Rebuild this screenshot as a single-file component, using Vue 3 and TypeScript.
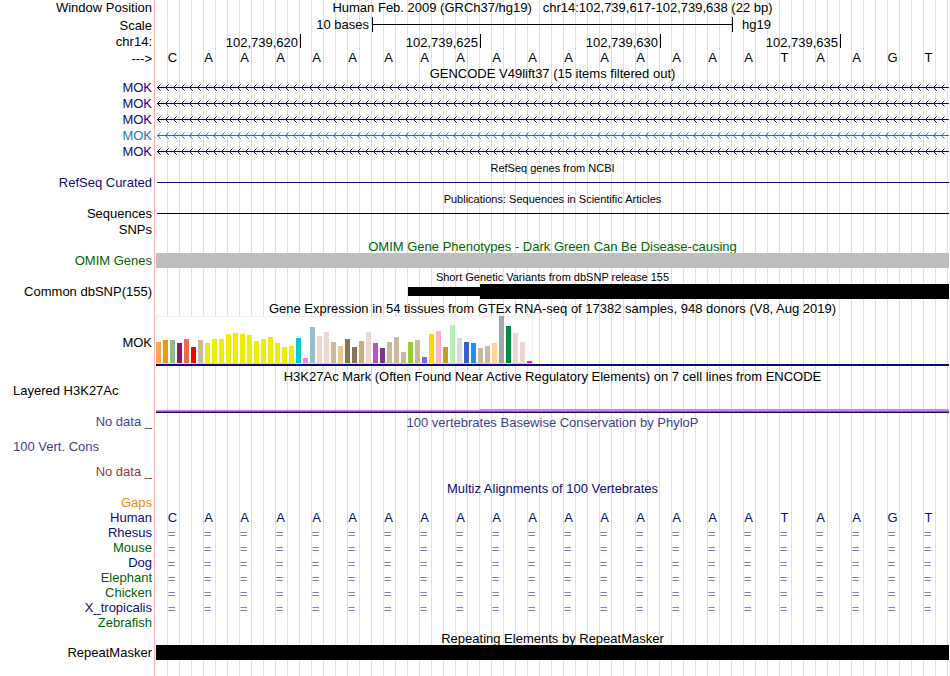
<script setup lang="ts">
interface Bar { h: number; c: string }

const bases: string[] = 'CAAAAAAAAAAAAAAAATAAGT'.split('')
const gridCells = 66

const transcripts: string[] = ['navy', 'navy', 'navy', 'blue', 'navy']
const species: { name: string; tone: string; aligned: boolean }[] = [
  { name: 'Rhesus', tone: 'navy', aligned: true },
  { name: 'Mouse', tone: 'green', aligned: true },
  { name: 'Dog', tone: 'navy', aligned: true },
  { name: 'Elephant', tone: 'green', aligned: true },
  { name: 'Chicken', tone: 'green', aligned: true },
  { name: 'X_tropicalis', tone: 'navy', aligned: true },
  { name: 'Zebrafish', tone: 'green', aligned: false },
]

const positions: string[] = ['102,739,620', '102,739,625', '102,739,630', '102,739,635']

// Median expression per tissue, as bar height in pixels and tissue colour
const tissues: Bar[] = (
  '21 ffa54f,23 ee9a00,23 8fbc8f,20 8b1c62,24 ee6a50,16 ff0000,23 cdb79e,' +
  '20 eeee00,24 eeee00,24 eeee00,29 eeee00,30 eeee00,29 eeee00,28 eeee00,22 eeee00,' +
  '24 eeee00,26 eeee00,20 eeee00,16 eeee00,17 eeee00,25 00cdcd,5 ee82ee,36 9ac0cd,' +
  '27 eed5d2,31 eed5d2,21 cdb79e,17 eec591,24 8b7355,16 8b7355,22 cdaa7d,31 eed5d2,' +
  '20 b452cd,15 7a378b,21 cdb79e,26 cdb79e,11 cdb79e,21 9acd32,23 cdb79e,6 7a67ee,' +
  '29 ffd700,32 ffb6c1,16 cd9b1d,38 b4eeb4,25 d9d9d9,21 3a5fcd,20 1e90ff,15 cdb79e,' +
  '17 cdb79e,20 ffd39b,47 a6a6a6,37 008b45,30 eed5d2,21 eed5d2,2 ff00ff'
).split(',').map((entry) => {
  const [h, c] = entry.split(' ')
  return { h: Number(h), c: '#' + c }
})
</script>

<template>
  <main class="browser">
    <div class="guides" aria-hidden="true">
      <span v-for="n in gridCells" :key="n"></span>
    </div>

    <div class="row h17">
      <div class="label">Window Position</div>
      <h1 class="title">Human Feb. 2009 (GRCh37/hg19) &nbsp; chr14:102,739,617-102,739,638 (22 bp)</h1>
    </div>
    <div class="row h17">
      <div class="label low">Scale</div>
      <div class="bases ruler">
        <span class="scale-name">10 bases</span>
        <span class="scale-bar"></span>
        <span class="scale-db">hg19</span>
      </div>
    </div>
    <div class="row h16">
      <div class="label">chr14:</div>
      <div class="bases ticks">
        <span v-for="p in positions" :key="p" class="tick">{{ p }}</span>
        <span class="tick last"></span>
      </div>
    </div>
    <div class="row h16">
      <div class="label low">---&gt;</div>
      <div class="bases letters">
        <span v-for="(b, i) in bases" :key="i">{{ b }}</span>
      </div>
    </div>

    <div class="row h14"><h2 class="title">GENCODE V49lift37 (15 items filtered out)</h2></div>
    <div v-for="(tone, i) in transcripts" :key="i" class="row h16" :class="tone">
      <div class="label">MOK</div>
      <svg class="strand" height="16" aria-hidden="true">
        <defs>
          <pattern :id="'arrows' + i" width="8" height="16" patternUnits="userSpaceOnUse">
            <path d="M1 7h1v1h-1zM2 6h1v1h-1zM2 8h1v1h-1zM3 5h1v1h-1zM3 9h1v1h-1z" fill="currentColor" />
            <path d="M4 4h1v1h-1zM4 10h1v1h-1z" fill="currentColor" opacity=".5" />
          </pattern>
        </defs>
        <rect width="100%" height="16" :fill="`url(#arrows${i})`" />
        <rect x="1" y="7" width="100%" height="1" fill="currentColor" />
      </svg>
    </div>

    <div class="row h15"><h2 class="title small">RefSeq genes from NCBI</h2></div>
    <div class="row h16 navy">
      <div class="label">RefSeq Curated</div>
      <div class="line"></div>
    </div>

    <div class="row h15"><h2 class="title small">Publications: Sequences in Scientific Articles</h2></div>
    <div class="row h16">
      <div class="label">Sequences</div>
      <div class="line"></div>
    </div>
    <div class="row h17"><div class="label">SNPs</div></div>

    <div class="row h14 green"><h2 class="title">OMIM Gene Phenotypes - Dark Green Can Be Disease-causing</h2></div>
    <div class="row h16 green">
      <div class="label">OMIM Genes</div>
      <div class="block grey"></div>
    </div>

    <div class="row h15"><h2 class="title small">Short Genetic Variants from dbSNP release 155</h2></div>
    <div class="row h17">
      <div class="label">Common dbSNP(155)</div>
      <div class="bases variants">
        <span class="thin"></span>
        <span class="thick"></span>
      </div>
    </div>

    <div class="row h15"><h2 class="title">Gene Expression in 54 tissues from GTEx RNA-seq of 17382 samples, 948 donors (V8, Aug 2019)</h2></div>
    <div class="row h53">
      <div class="label middle">MOK</div>
      <div class="chart">
        <div class="bars">
          <span v-for="(t, i) in tissues" :key="i" :style="{ height: t.h + 'px', background: t.c }"></span>
        </div>
      </div>
    </div>

    <div class="row h14"><h2 class="title">H3K27Ac Mark (Often Found Near Active Regulatory Elements) on 7 cell lines from ENCODE</h2></div>
    <div class="row h31">
      <div class="label start">Layered H3K27Ac</div>
      <div class="signal">
        <div class="bases"><span class="raised"></span></div>
      </div>
    </div>

    <div class="row h25 violet">
      <div class="label">No data _</div>
      <h2 class="title low">100 vertebrates Basewise Conservation by PhyloP</h2>
    </div>
    <div class="row h25 violet"><div class="label start">100 Vert. Cons</div></div>
    <div class="row h17 maroon"><div class="label">No data _</div></div>

    <div class="row h14 navy"><h2 class="title">Multiz Alignments of 100 Vertebrates</h2></div>
    <div class="row h15 orange"><div class="label">Gaps</div></div>
    <div class="row h15 navy">
      <div class="label">Human</div>
      <div class="bases letters">
        <span v-for="(b, i) in bases" :key="i">{{ b }}</span>
      </div>
    </div>
    <div v-for="s in species" :key="s.name" class="row h15" :class="s.tone">
      <div class="label">{{ s.name }}</div>
      <div v-if="s.aligned" class="bases letters same">
        <span v-for="n in bases.length" :key="n">=</span>
      </div>
    </div>

    <div class="row h15"><h2 class="title low">Repeating Elements by RepeatMasker</h2></div>
    <div class="row h15">
      <div class="label">RepeatMasker</div>
      <div class="block"></div>
    </div>
  </main>
</template>

<style>
body {
  margin: 0;
  background: #fff;
}
</style>

<style scoped>
.browser {
  position: relative;
  padding: 0 1px 16px 0;
  color: #000;
  font: 13px/16px "Liberation Sans", Arial, sans-serif;
}
.guides {
  position: absolute;
  inset: 0 1px 0 154px;
  display: grid;
  grid-template-columns: repeat(66, 1fr);
  padding: 0 1px;
  border-left: 1px solid #ffb0b0;
}
.guides span { border-right: 1px solid #dcdcf8; }

.row {
  position: relative;
  display: grid;
  grid-template: 100% / 152px minmax(0, 1fr);
  column-gap: 4px;
  align-items: start;
}
.h14 { height: 14px; }
.h15 { height: 15px; }
.h16 { height: 16px; }
.h17 { height: 17px; }
.h25 { height: 25px; }
.h31 { height: 31px; }
.h53 { height: 53px; }

.navy { color: #0c0c78; }
.blue { color: #1a78b4; }
.green { color: #006400; }
.violet { color: #404090; }
.maroon { color: #8a3c3c; }
.orange { color: #e88c10; }

.label {
  grid-column: 1;
  text-align: right;
  white-space: nowrap;
}
.label.start {
  padding-left: 13px;
  text-align: left;
}
.label.middle { align-self: center; }

.title {
  grid-column: 2;
  margin: 0;
  font-size: 13px;
  font-weight: 400;
  text-align: center;
  white-space: nowrap;
}
.title.small { font-size: 11px; }
.low { line-height: 18px; }

.bases {
  display: grid;
  grid-column: 2;
  grid-template-columns: repeat(22, 1fr);
  padding-right: 1px;
}
.letters span {
  padding-right: 3px;
  text-align: center;
}
.letters.same span {
  padding-right: 5px;
  color: #8080b8;
  line-height: 18px;
}

.scale-name {
  grid-column: span 6;
  padding-right: 3px;
  text-align: right;
}
.scale-bar {
  grid-column: span 10;
  height: 15px;
  margin-right: -1px;
  border: solid #000;
  border-width: 0 1px;
  background: linear-gradient(#000, #000) center / 100% 1px no-repeat;
}
.scale-db { grid-column: span 6; padding-left: 10px; }

.tick {
  grid-column: span 5;
  height: 14px;
  padding-right: 2px;
  border-left: 1px solid #000;
  line-height: 18px;
  text-align: right;
}
.tick:first-child { grid-column: span 4; border-left: 0; }
.tick.last { grid-column: span 3; }

.strand { display: block; width: 100%; }
.line {
  height: 1px;
  margin: 7px 0 0 1px;
  background: currentColor;
}
.block { height: 15px; background: #000; }
.block.grey { background: #bebebe; }

.variants { align-items: center; padding-right: 0; }
.thin { grid-column: 8 / span 2; height: 9px; background: #000; }
.thick { grid-column: 10 / -1; height: 15px; background: #000; }

.chart { border-bottom: 2px solid #0c0c78; }
.bars {
  display: flex;
  align-items: flex-end;
  gap: 2px;
  width: max-content;
  height: 47px;
  padding-right: 1px;
  border-bottom: 1px solid #d8d8d8;
  background: #fff;
  box-shadow: inset 0 0 0 1px #f0f0f0;
}
.bars span { width: 5px; }

.signal {
  align-self: end;
  height: 3px;
  margin-bottom: 1px;
  border-bottom: 1px solid #181450;
  background: linear-gradient(transparent 1px, #c878f8 1px, #c878f8 2px, #7060c0 2px);
}
.signal .bases { padding-right: 0; }
.raised { grid-column: 10 / -1; height: 2px; background: #d080ff; }
</style>
